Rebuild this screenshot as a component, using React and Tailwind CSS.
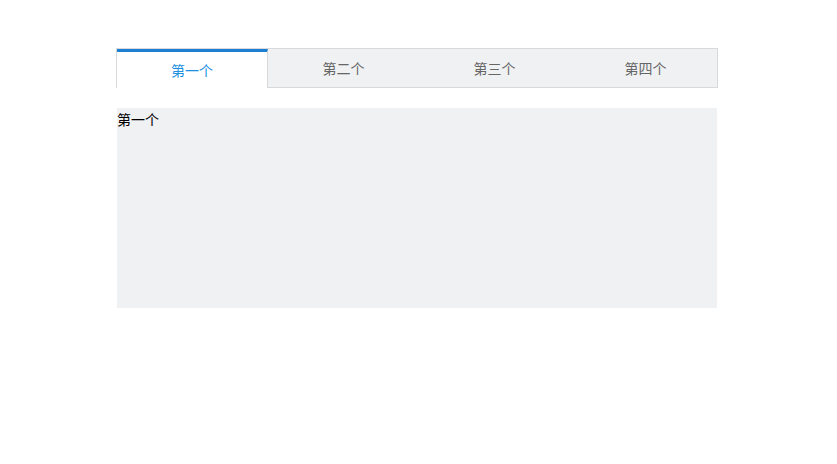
import { useState } from 'react'

const TABS = ['第一个', '第二个', '第三个', '第四个']

export default function App() {
  const [active, setActive] = useState(0)

  return (
    <div
      className="min-h-screen bg-white pt-[48px] pl-[116px]"
      style={{ fontFamily: '"Noto Sans CJK SC", "Liberation Sans", sans-serif' }}
    >
      {/* 标签栏 */}
      <div className="flex w-[602px] h-[40px] border border-[#d8d9dc] bg-[#f0f1f3] overflow-x-clip">
        {TABS.map((label, i) => (
          <button
            key={label}
            onClick={() => setActive(i)}
            className={
              i === active
                ? 'shrink-0 w-[151px] h-[39px] -mb-px bg-white border-t-[3px] border-r border-t-[#1e7fd0] border-r-[#d8d9dc] text-[14px] text-[#1e90e0]'
                : 'shrink-0 w-[151px] h-[38px] text-[14px] text-[#666666]'
            }
          >
            {label}
          </button>
        ))}
      </div>

      {/* 内容区 */}
      <div className="ml-px mt-[20px] w-[600px] h-[200px] bg-[#f0f1f3] text-[14px] text-black leading-[22px]">
        {TABS[active]}
      </div>
    </div>
  )
}
